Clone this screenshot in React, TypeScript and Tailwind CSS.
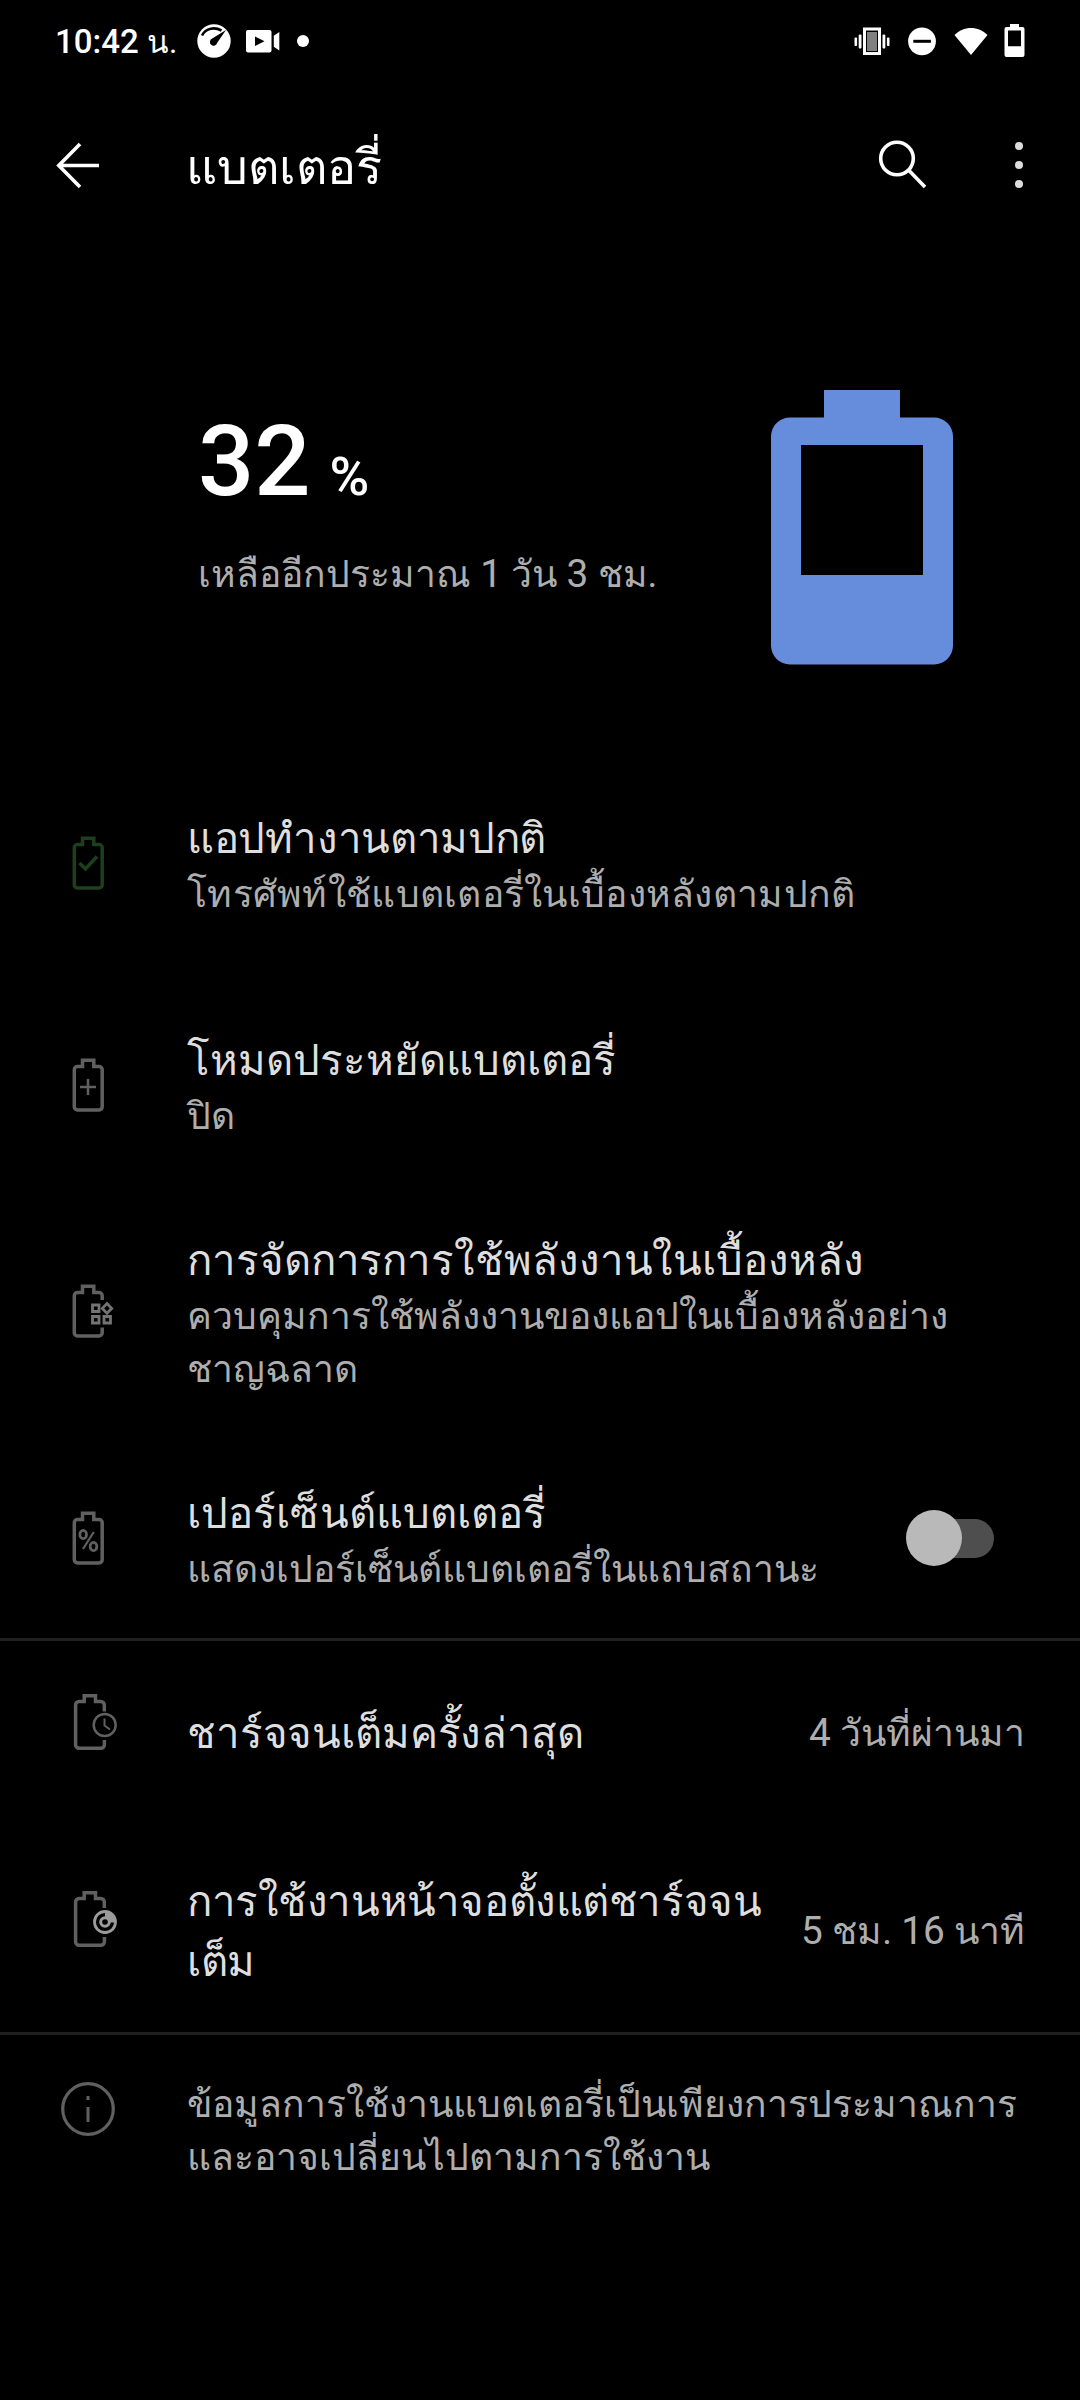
import type { ReactNode } from 'react';

function RowIcon({ className = '', children }: { className?: string; children: ReactNode }) {
  return (
    <svg
      className={`ml-[60px] w-[60px] h-[60px] shrink-0 ${className}`}
      viewBox="0 0 60 60"
      fill="none"
      stroke="currentColor"
      strokeWidth="3.5"
    >
      {children}
    </svg>
  );
}

function BatteryBody() {
  return <path d="M17.5 11.5H22.5V5.2H33.8V11.5H39a3.2 3.2 0 0 1 3.2 3.2V51.8a3.2 3.2 0 0 1-3.2 3.2H17.5a3.2 3.2 0 0 1-3.2-3.2V14.7a3.2 3.2 0 0 1 3.2-3.2z" />;
}

// Latin digits sit slightly larger than the Thai letters around them
function Num({ children }: { children: ReactNode }) {
  return <span className="text-[1.04em] leading-none">{children}</span>;
}

function Title({ className = '', children }: { className?: string; children: ReactNode }) {
  return <p className={`text-[42px] leading-[60px] text-[#dedede] ${className}`}>{children}</p>;
}

function Summary({ className = '', children }: { className?: string; children: ReactNode }) {
  return <p className={`-mt-px text-[37.25px] leading-[53.3px] text-[#aeaeae] ${className}`}>{children}</p>;
}

function StatusBar() {
  return (
    <div className="flex h-[82px] items-center justify-between px-[55px]">
      <div className="flex items-center">
        <span className="w-[142px] pt-[2px] text-[33px] font-medium leading-[60px]">
          10:42 <span className="text-[31.5px] font-normal">น.</span>
        </span>
        <svg className="h-[34px] w-[34px]" viewBox="0 0 34 34">
          <circle cx="17" cy="17" r="16.7" fill="#fff" />
          <path d="M5 11.5C9 3.5 18 3 24.5 6.5" fill="none" stroke="#000" strokeWidth="2.6" />
          <path d="M29 6 20.2 18.8A3.7 3.7 0 1 1 15.2 14.6Z" fill="#000" />
        </svg>
        <svg className="ml-[15px] h-[34px] w-[34px]" viewBox="0 0 34 34" fill="#fff">
          <rect x="0" y="6" width="25.5" height="22.5" rx="2" />
          <path d="M33.3 8v18.5l-5.5-3.8V11.8z" />
          <path d="M9 12.5v9.4l9.5-4.7z" fill="#000" />
        </svg>
        <span className="ml-[17px] h-3 w-3 rounded-full bg-white" />
      </div>
      <div className="flex items-center">
        <svg className="h-[34px] w-[36px]" viewBox="0 0 36 34" fill="#fff">
          <rect x="10.5" y="5" width="15" height="24.5" fill="#000" stroke="#fff" strokeWidth="3" />
          <rect x="13" y="8" width="10" height="19" fill="#808080" />
          <rect x="0.5" y="13.5" width="2.6" height="8.5" rx="1" />
          <rect x="4.7" y="10.5" width="2.8" height="14" rx="1" />
          <rect x="28.5" y="10.5" width="2.8" height="14" rx="1" />
          <rect x="32.9" y="13.5" width="2.6" height="8.5" rx="1" />
        </svg>
        <svg className="ml-[16px] mr-[18px] h-[34px] w-[30px]" viewBox="0 0 30 34">
          <circle cx="16" cy="17.3" r="13.9" fill="#fff" />
          <path d="M7.3 17.3h17.6" stroke="#000" strokeWidth="3" />
        </svg>
        <svg className="h-[34px] w-[34px]" viewBox="0 0 34 34">
          <path d="M.5 11C9.5 1.5 24.5 1.5 33.5 11L17 31z" fill="#fff" />
        </svg>
        <svg className="ml-[16px] h-[34px] w-[21px]" viewBox="0 0 21 34">
          <path
            fill="#fff"
            fillRule="evenodd"
            d="M6 0h9v3h3.5a2 2 0 0 1 2 2v26a2 2 0 0 1-2 2h-16a2 2 0 0 1-2-2V5a2 2 0 0 1 2-2H6zM4 6.5V22.3h13V6.5z"
          />
        </svg>
      </div>
    </div>
  );
}

function AppBar() {
  return (
    <header className="flex h-[165px] items-center">
      <svg className="ml-[56px] h-[48px] w-[44px]" viewBox="0 0 44 48" fill="none" stroke="#fff" strokeWidth="3.6">
        <path d="M43 24.5H3M24 3 2.8 24.5 24 46" />
      </svg>
      <h1 className="ml-[86px] grow pt-[6px] text-[48.5px] leading-[70px] text-white">แบตเตอรี่</h1>
      <svg className="mr-[88px] h-[50px] w-[50px]" viewBox="0 0 50 50" fill="none" stroke="#fff" strokeWidth="3.6">
        <circle cx="20" cy="18.5" r="16.3" />
        <path d="m31.5 30 16.500 17" />
      </svg>
      <div className="mr-[57px] flex flex-col gap-[11px]">
        <span className="h-2 w-2 rounded-full bg-[#dcdcdc]" />
        <span className="h-2 w-2 rounded-full bg-[#dcdcdc]" />
        <span className="h-2 w-2 rounded-full bg-[#dcdcdc]" />
      </div>
    </header>
  );
}

function Hero() {
  return (
    <section className="flex h-[508px] pl-[198px] pr-[127px]">
      <div className="grow pt-[154px]">
        <div className="text-[99px] font-medium leading-[120px] text-white">
          32<span className="ml-[19px] text-[54px] leading-none">%</span>
        </div>
        <p className="mt-[27px] text-[37.25px] leading-[53px] text-[#aeaeae]">
          เหลืออีกประมาณ <Num>1</Num> วัน <Num>3</Num> ชม.
        </p>
      </div>
      <svg className="mt-[143px] h-[275px] w-[182px] shrink-0" viewBox="0 0 182 275">
        <path
          fill="#668ddc"
          fillRule="evenodd"
          d="M53 0h76v27.5h34a19 19 0 0 1 19 19v209a19 19 0 0 1-19 19H19a19 19 0 0 1-19-19V46.5a19 19 0 0 1 19-19h34zM30 55v130h122V55z"
        />
      </svg>
    </section>
  );
}

export default function App() {
  return (
    <main className="h-[2400px] w-[1080px] overflow-hidden whitespace-nowrap bg-black font-['Roboto','sans-serif'] text-white">
      <StatusBar />
      <AppBar />
      <Hero />

      <div className="flex h-[222px]">
        <RowIcon className="mt-[78px] text-[#1d3f1e]">
          <BatteryBody />
          <path d="m19.5 30 6 6L37 23.500" />
        </RowIcon>
        <div className="pl-[67px] pt-[54px]">
          <Title className="tracking-[-0.3px]">แอปทำงานตามปกติ</Title>
          <Summary className="tracking-[0.28px]">โทรศัพท์ใช้แบตเตอรี่ในเบื้องหลังตามปกติ</Summary>
        </div>
      </div>

      <div className="flex h-[222px]">
        <RowIcon className="mt-[78px] text-[#606060]">
          <BatteryBody />
          <path d="M20 32h16M28 24v16" strokeWidth="2.5" />
        </RowIcon>
        <div className="pl-[67px] pt-[54px]">
          <Title>โหมดประหยัดแบตเตอรี่</Title>
          <Summary>ปิด</Summary>
        </div>
      </div>

      <div className="flex h-[231px]">
        <RowIcon className="mt-[82px] text-[#606060]">
          <path d="M42.2 19V14.7a3.2 3.2 0 0 0-3.2-3.2H33.8V5.2H22.5V11.5H17.5a3.2 3.2 0 0 0-3.2 3.2V51.8a3.2 3.2 0 0 0 3.2 3.2H39a3.2 3.2 0 0 0 3.2-3.2V46.5" />
          <g strokeWidth="2.8" stroke="#737373">
            <path d="M32.5 24h6.5v6.5h-6.5zM32.5 35.5h6.5v6.5h-6.5zM44 35.5h6.5v6.5H44z" />
            <path d="m47 22.5 4.7 4.9-4.7 4.9-4.7-4.900z" />
          </g>
        </RowIcon>
        <div className="pl-[67px] pt-[32px]">
          <Title className="tracking-[-0.08px]">การจัดการการใช้พลังงานในเบื้องหลัง</Title>
          <Summary>
            ควบคุมการใช้พลังงานของแอปในเบื้องหลังอย่าง
            <br />
            ชาญฉลาด
          </Summary>
        </div>
      </div>

      <div className="flex h-[208px]">
        <RowIcon className="mt-[78px] text-[#606060]">
          <BatteryBody />
          <ellipse cx="23.2" cy="26.5" rx="3.300" ry="4.2" strokeWidth="2.8" />
          <ellipse cx="33.5" cy="38.5" rx="3.300" ry="4.2" strokeWidth="2.8" />
          <path d="M33.8 24 23 41" strokeWidth="2.2" />
        </RowIcon>
        <div className="grow pl-[67px] pt-[54px]">
          <Title className="tracking-[0.1px]">เปอร์เซ็นต์แบตเตอรี่</Title>
          <Summary>แสดงเปอร์เซ็นต์แบตเตอรี่ในแถบสถานะ</Summary>
        </div>
        <button type="button" className="mr-[86px] mt-[80px] flex h-[56px] w-[88px] items-center">
          <span className="z-10 h-[56px] w-[56px] shrink-0 rounded-full bg-[#b9b9b9]" />
          <span className="-ml-[20px] h-[39px] w-[52px] shrink-0 rounded-r-full bg-[#4e4e4e]" />
        </button>
      </div>

      <div className="h-[3px] bg-[#202020]" />

      <div className="flex h-[197px]">
        <RowIcon className="mt-[51px] text-[#606060]">
          <path d="M44.3 19.5V12.9a3.4 3.4 0 0 0-3.4-3.4H35.5V3.8H24.2V9.5H19a3.4 3.4 0 0 0-3.400 3.4V52.8a3.4 3.4 0 0 0 3.4 3.4H41a3.4 3.4 0 0 0 3.4-3.4V48" />
          <circle cx="44.7" cy="33" r="11" strokeWidth="2.5" />
          <path d="M44.5 26.5v7l5.5 4" strokeWidth="2" />
        </RowIcon>
        <div className="grow pl-[67px] pt-[63px]">
          <Title className="tracking-[-0.15px]">ชาร์จจนเต็มครั้งล่าสุด</Title>
        </div>
        <div className="pr-[55px] pt-[67px]">
          <Summary>
            <Num>4</Num> วันที่ผ่านมา
          </Summary>
        </div>
      </div>

      <div className="flex h-[194px]">
        <RowIcon className="mt-[51px] text-[#606060]">
          <path d="M44.3 19V12.9a3.4 3.4 0 0 0-3.4-3.4H35.5V3.8H24.2V9.5H19a3.4 3.4 0 0 0-3.4 3.4V52.8a3.4 3.4 0 0 0 3.4 3.4H41a3.4 3.4 0 0 0 3.4-3.4V48" />
          <g stroke="#9b9b9b">
            <circle cx="45" cy="33" r="10.5" strokeWidth="2.8" />
            <path d="M45 22v7a4.5 4.5 0 0 1 4.5 4.5H56A11 11 0 0 0 45 22z" fill="#9b9b9b" stroke="none" />
            <circle cx="45" cy="33" r="4.3" strokeWidth="3" />
          </g>
        </RowIcon>
        <div className="grow pl-[67px] pt-[34px]">
          <Title className="tracking-[-0.42px]">
            การใช้งานหน้าจอตั้งแต่ชาร์จจน
            <br />
            เต็ม
          </Title>
        </div>
        <div className="pr-[55px] pt-[68px]">
          <Summary>
            <Num>5</Num> ชม. <Num>16</Num> นาที
          </Summary>
        </div>
      </div>

      <div className="h-[3px] bg-[#202020]" />

      <div className="flex">
        <RowIcon className="mt-[44px] text-[#606060]">
          <circle cx="28" cy="30" r="25.3" strokeWidth="3.2" />
          <path d="M28 28v15M28 17v4" strokeWidth="3" />
        </RowIcon>
        <div className="pl-[67px] pt-[44px]">
          <Summary>
            ข้อมูลการใช้งานแบตเตอรี่เป็นเพียงการประมาณการ
            <br />
            และอาจเปลี่ยนไปตามการใช้งาน
          </Summary>
        </div>
      </div>
    </main>
  );
}
